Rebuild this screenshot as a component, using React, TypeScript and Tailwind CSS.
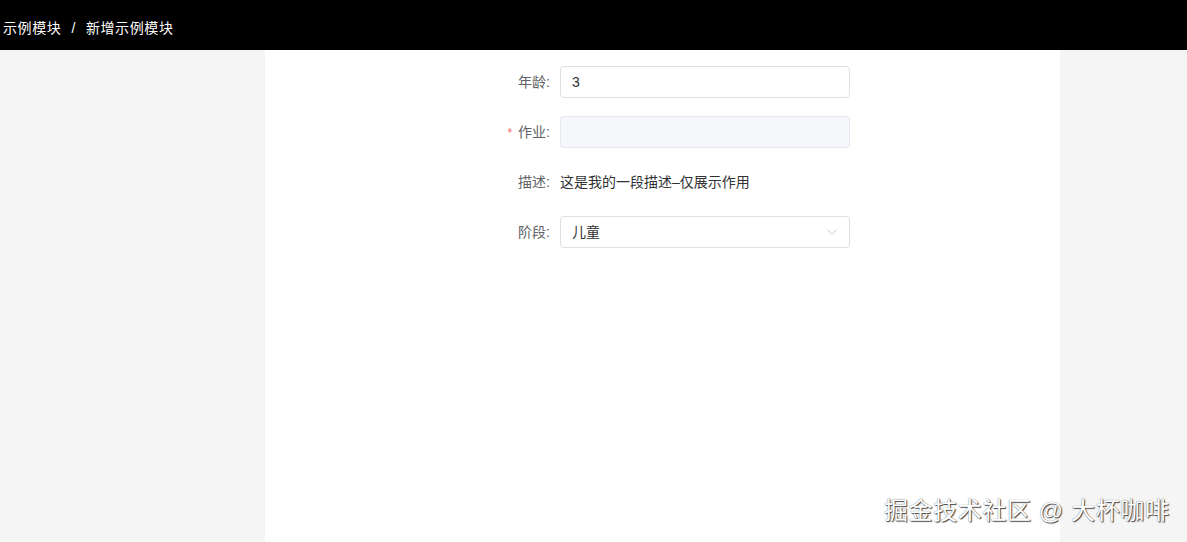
import { ChevronDown } from 'lucide-react'

const font = { fontFamily: '"Liberation Sans", "Noto Sans CJK SC", sans-serif' }

function Label({ text, required }: { text: string; required?: boolean }) {
  return (
    <div className="w-[100px] shrink-0 pr-[10px] text-right text-[14px] text-[#606266]">
      {required && <span className="mr-[6px] text-[12px] text-[#f56c6c]">*</span>}
      {text}:
    </div>
  )
}

export default function App() {
  return (
    <div className="flex h-[542px] flex-col overflow-hidden bg-[#f5f5f5]" style={font}>
      {/* Top bar */}
      <div className="flex h-[50px] shrink-0 items-center bg-black px-[3px] pt-[6px] text-[14px] tracking-[0.6px] text-white">
        <span>示例模块</span>
        <span className="mx-[10px]">/</span>
        <span>新增示例模块</span>
      </div>

      {/* Content */}
      <div className="flex flex-1">
        <div className="w-[265px] shrink-0" />
        <div className="w-[795px] bg-white pl-[195px] pt-[16px]">
          <div className="flex flex-col gap-[18px]">
            <div className="flex h-[32px] items-center">
              <Label text="年龄" />
              <div className="flex h-[32px] w-[290px] items-center rounded border border-[#dcdfe6] px-[11px] text-[14px] text-[#303133]">
                3
              </div>
            </div>
            <div className="flex h-[32px] items-center">
              <Label text="作业" required />
              <div className="h-[32px] w-[290px] rounded border border-[#e4e7ed] bg-[#f5f7fa]" />
            </div>
            <div className="flex h-[32px] items-center">
              <Label text="描述" />
              <span className="text-[14px] text-[#303133]">这是我的一段描述–仅展示作用</span>
            </div>
            <div className="flex h-[32px] items-center">
              <Label text="阶段" />
              <div className="flex h-[32px] w-[290px] items-center justify-between rounded border border-[#dcdfe6] pl-[11px] pr-[8px] text-[14px] text-[#303133]">
                <span>儿童</span>
                <ChevronDown size={18} strokeWidth={1.2} className="text-[#c0c4cc]" />
              </div>
            </div>
          </div>
        </div>
        <div className="flex-1" />
      </div>

      {/* Watermark */}
      <div
        className="absolute left-[884px] top-[493px] text-[24px] tracking-[0.6px] text-white"
        style={{ textShadow: '0 0 1px #555, 1px 1px 1px #444' }}
      >
        掘金技术社区 @ 大杯咖啡
      </div>
    </div>
  )
}
